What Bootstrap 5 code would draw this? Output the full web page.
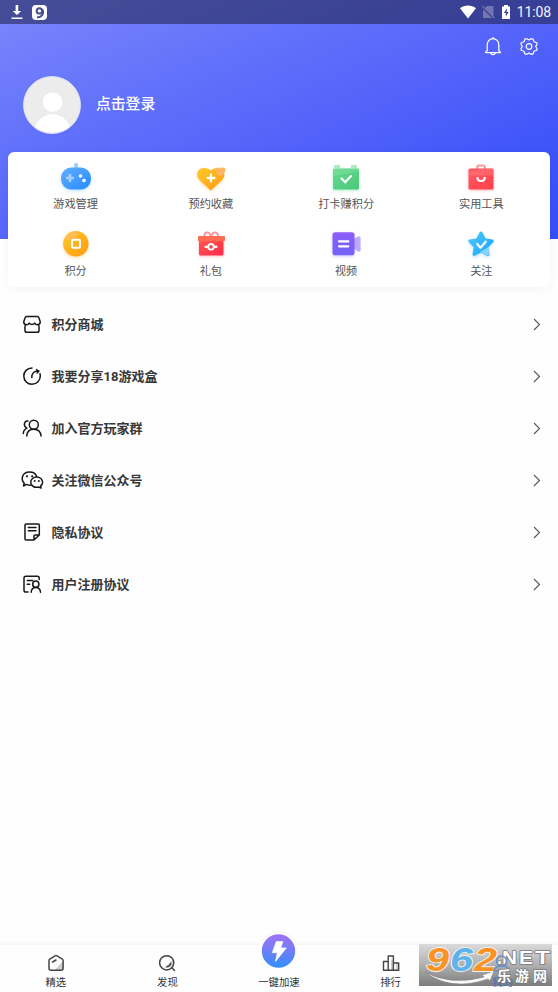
<!DOCTYPE html>
<html lang="zh-CN">
<head>
<meta charset="utf-8">
<meta name="viewport" content="width=device-width, initial-scale=1">
<title>我的</title>
<link href="https://cdn.jsdelivr.net/npm/bootstrap@5.3.0/dist/css/bootstrap.min.css" rel="stylesheet">
<style>
body{font-family:Roboto,"Noto Sans CJK SC",sans-serif;height:992px;overflow:hidden;background:#fefefe;color:#333}
svg{display:block;overflow:visible;flex-shrink:0}
.hero{height:239px;background:linear-gradient(to bottom right,#7b87fd 0%,#6574fa 28%,#5363fa 55%,#3d53f9 82%,#344ef8 100%)}
.status{height:24px;background:rgba(30,32,72,.56);padding:0 7px 0 10px}
.gap-status{margin-left:6px}
.clock{font-size:14px;line-height:24px;font-weight:400;letter-spacing:-.1px;color:#f5f5ff;margin-left:6px}
.tools{height:45px;padding-right:20px;gap:18px}
.who{height:70px;padding:1px 0 0 23px;gap:15px}
.login{font-size:14.8px;font-weight:500}
.panel{height:135px;margin:-87px 8px 0;border-radius:6px;box-shadow:0 2px 10px rgba(0,0,0,.045);position:relative}
.panel .row{margin-right:1px}
.cell{height:67px;padding-top:7px}
.cell span{font-size:11.2px;line-height:16px;color:#555;margin-top:2px}
.cell svg{width:36px;height:36px}
.entries{margin-top:11px}
.entry{height:52px;padding:0 17px 0 20px;gap:7.5px;font-size:13px;font-weight:700;color:#383838}
.entry span{padding-top:2px}
.ink{fill:none;stroke:#171717;stroke-width:1.5;stroke-linecap:round;stroke-linejoin:round}
.tabs{height:47px;padding-bottom:1px;box-shadow:0 -1px 3px rgba(0,0,0,.06);background:#fefefe}
.tab{font-size:10.4px;line-height:16px;width:20%;color:#333}
.tab svg{margin-bottom:3px}
.mark-box{left:419px;top:944px}
</style>
<script src="https://cdn.jsdelivr.net/npm/bootstrap@5.3.0/dist/js/bootstrap.bundle.min.js"></script>
</head>
<body class="d-flex flex-column position-relative">
<header class="hero flex-shrink-0 text-white">
  <div class="status d-flex align-items-center">
    <svg width="14" height="16" viewBox="0 0 14 16"><path d="M5.6 1h2.6v6h3L7 11 2.7 7h2.9zM1.5 13.5h11V15h-11z" fill="#fff"/></svg>
    <svg class="ms-2" width="15" height="15" viewBox="0 0 15 15"><rect width="15" height="15" rx="4" fill="#fff"/><circle cx="7.4" cy="5.9" r="2.7" fill="none" stroke="#484c90" stroke-width="2"/><path d="M10.6 4.5C12.4 9 9.5 12.2 5 12.5" fill="none" stroke="#484c90" stroke-width="1.9"/></svg>
    <svg class="ms-auto" width="16" height="14" viewBox="0 0 16 14"><path d="M0 3.2C4.5-.4 11.5-.4 16 3.2L8 13.4z" fill="#fff"/></svg>
    <svg class="gap-status" width="13" height="14" viewBox="0 0 13 14"><path d="M5 1h6.5v12H1V5z" fill="#7277b2"/><path d="M0 1.5l12 12" stroke="#414595" stroke-width="2.4"/><path d="M.5 1l12 12" stroke="#8b8fc3"/></svg>
    <svg class="gap-status" width="10" height="14" viewBox="0 0 10 14"><path d="M3 0h4v1.5h2V14H1V1.5h2z" fill="#fff"/><path d="M6 3.2L2.8 8h2v3.5L7.7 7h-2z" fill="#414595"/></svg>
    <span class="clock">11:08</span>
  </div>
  <div class="tools d-flex justify-content-end align-items-center">
    <svg width="18" height="20" viewBox="0 0 18 20" fill="none" stroke="#fff" stroke-width="1.25" stroke-linejoin="round"><path d="M9 .1v1.5M3.2 13.5V7.8a5.8 6.2 0 0 1 11.6 0v5.7l1.7 2h-15zM6.7 15.7c.2 2.5 4.4 2.5 4.6 0"/></svg>
    <svg width="18" height="18" viewBox="0 0 18 18" fill="none" stroke="#fff" stroke-width="1.2" stroke-linejoin="round"><path d="M5.1.8h2L9 2 10.900.8h2L14 3.800l2.800 1L17 6.500 15.600 8.500 17 10.500l-.2 1.700-2.800 1-1.100 3h-2L9 15l-1.900 1.200h-2L4 13.200l-2.800-1L1 10.500l1.400-2L1 6.500l.2-1.700 2.800-1z"/><circle cx="9" cy="8.500" r="2.800"/></svg>
  </div>
  <div class="who d-flex align-items-center">
    <svg width="58" height="58" viewBox="0 0 58 58"><defs><clipPath id="face"><circle cx="29" cy="29" r="28"/></clipPath></defs><circle cx="29" cy="29" r="28.6" fill="#ececec"/><circle cx="29.5" cy="26" r="9.8" fill="#fff"/><ellipse cx="29.5" cy="56" rx="18" ry="17.8" fill="#fff" clip-path="url(#face)"/><circle cx="29" cy="29" r="28.4" fill="none" stroke="#dedffa"/></svg>
    <span class="login">点击登录</span>
  </div>
</header>

<section class="panel bg-white flex-shrink-0">
  <div class="row g-0">
    <div class="col-3 cell d-flex flex-column align-items-center">
      <svg viewBox="0 0 36 36"><defs><linearGradient id="blue" x2="1" y2="1"><stop stop-color="#64adff"/><stop offset="1" stop-color="#258cff"/></linearGradient><filter id="glow" x="-30%" y="-30%" width="160%" height="170%"><feDropShadow dx="0" dy="1.3" stdDeviation="1.6" flood-color="#60b5ff" flood-opacity=".45"/></filter></defs><rect x="16.4" y="4" width="3.4" height="7" rx="1.2" fill="#9bcaff"/><rect x="3" y="8.500" width="30" height="22" rx="10.5" fill="url(#blue)" filter="url(#glow)"/><path d="M12 15v8M8 19h8" stroke="#a4d0ff" stroke-width="2.7"/><circle cx="22.5" cy="17" r="1.8" fill="#fff"/><circle cx="26" cy="21.5" r="1.8" fill="#fff"/></svg>
      <span>游戏管理</span>
    </div>
    <div class="col-3 cell d-flex flex-column align-items-center">
      <svg viewBox="0 0 36 36"><defs><linearGradient id="gold" x2="1" y2="1"><stop stop-color="#ffca28"/><stop offset="1" stop-color="#ff9812"/></linearGradient><filter id="glowGold" x="-30%" y="-30%" width="160%" height="170%"><feDropShadow dx="0" dy="1.3" stdDeviation="1.4" flood-color="#ffa726" flood-opacity=".4"/></filter></defs><path d="M16.7 30.6L6.500 21C0 14 8 4.500 17.800 11.500 27.500 4.500 35.500 14 29 21L19 30.600Q17.800 31.700 16.700 30.600z" fill="url(#gold)" filter="url(#glowGold)"/><path d="M27.300 17.500c-8-5.500-4-10.700.4-8.500 5.500-2 7.400 4-.4 8.500z" fill="#ffb765"/><path d="M18 15.500v7M14.500 19h7" stroke="#fff" stroke-width="2.300" stroke-linecap="round"/></svg>
      <span>预约收藏</span>
    </div>
    <div class="col-3 cell d-flex flex-column align-items-center">
      <svg viewBox="0 0 36 36"><defs><linearGradient id="green" x2="1" y2="1"><stop stop-color="#68db90"/><stop offset="1" stop-color="#48c779"/></linearGradient><filter id="glowGreen" x="-30%" y="-30%" width="160%" height="170%"><feDropShadow dx="0" dy="1" stdDeviation="1.4" flood-color="#50cf82" flood-opacity=".45"/></filter></defs><path d="M6 6h6v3H6zM23 6h6v3h-6z" fill="#b0e9c4"/><rect x="5" y="9.500" width="26" height="21" rx="1.500" fill="url(#green)" filter="url(#glowGreen)"/><path d="M5 9.500h26v3L5 17z" fill="#89e2a4" opacity=".35"/><path d="M13.500 19.500l3.700 3.700L23 17" fill="none" stroke="#fff" stroke-width="2.200" stroke-linecap="round"/></svg>
      <span>打卡赚积分</span>
    </div>
    <div class="col-3 cell d-flex flex-column align-items-center">
      <svg viewBox="0 0 36 36"><defs><linearGradient id="red" x2="1" y2="1"><stop stop-color="#ff5965"/><stop offset="1" stop-color="#ff4148"/></linearGradient><filter id="glowRed" x="-30%" y="-30%" width="160%" height="170%"><feDropShadow dx="0" dy="1" stdDeviation="1.4" flood-color="#ff5965" flood-opacity=".4"/></filter></defs><rect x="14.3" y="6.600" width="7.600" height="6" rx="1.500" fill="none" stroke="#f49ba1" stroke-width="2"/><rect x="5.500" y="9.500" width="25" height="21" rx="1.500" fill="url(#red)" filter="url(#glowRed)"/><path d="M5.500 13.500l16-4h9v7h-25z" fill="#ff817f" opacity=".45"/><path d="M14.500 18v.7c0 4.400 7.200 4.400 7.200 0V18" fill="none" stroke="#fff" stroke-width="2.100"/></svg>
      <span>实用工具</span>
    </div>
    <div class="col-3 cell d-flex flex-column align-items-center">
      <svg viewBox="0 0 36 36"><circle cx="17.800" cy="17.700" r="12.700" fill="url(#gold)" filter="url(#glowGold)"/><path d="M6 14Q10 4 20 5.400C22 9 14 15 6 14z" fill="#ffbe62" opacity=".7"/><rect x="14" y="13.700" width="8" height="8" rx="1.300" fill="none" stroke="#fff" stroke-width="2"/></svg>
      <span>积分</span>
    </div>
    <div class="col-3 cell d-flex flex-column align-items-center">
      <svg viewBox="0 0 36 36"><defs><linearGradient id="gift" x2="1" y2="1"><stop stop-color="#ff5a51"/><stop offset="1" stop-color="#ff2949"/></linearGradient></defs><path d="M11.500 11c-1-7 6-5 6 0M18.500 11c0-5 7-7 6.500 0" fill="none" stroke="#f79a9f" stroke-width="2"/><rect x="6" y="12" width="24.500" height="17.500" rx="1.500" fill="url(#gift)" filter="url(#glowRed)"/><rect x="5" y="10" width="27" height="5.300" rx="1" fill="#ff6c51"/><path d="M12.500 20.800H15m6 0h2.500" stroke="#fff" stroke-width="2.200" stroke-linecap="round"/><circle cx="18" cy="20.800" r="2.800" fill="none" stroke="#fff" stroke-width="1.900"/></svg>
      <span>礼包</span>
    </div>
    <div class="col-3 cell d-flex flex-column align-items-center">
      <svg viewBox="0 0 36 36"><defs><linearGradient id="purple" y2="1" x2="0"><stop stop-color="#8c5cf8"/><stop offset="1" stop-color="#7164f9"/></linearGradient><filter id="glowPurple" x="-30%" y="-30%" width="160%" height="170%"><feDropShadow dx="0" dy="1.2" stdDeviation="1.4" flood-color="#9976ff" flood-opacity=".4"/></filter></defs><path d="M25 13.800l4.800-3.300q2.800-.8 2.800 1.500v12q0 2.300-2.800 1.500L25 22z" fill="#bdabff"/><rect x="4.500" y="6.200" width="22" height="23" rx="2.800" fill="url(#purple)" filter="url(#glowPurple)"/><path d="M11 15.400h9.300M11 20.300h9.300" stroke="#fff" stroke-width="2.200" stroke-linecap="round"/></svg>
      <span>视频</span>
    </div>
    <div class="col-3 cell d-flex flex-column align-items-center">
      <svg viewBox="0 0 36 36"><defs><linearGradient id="sky" x2="1" y2="1"><stop stop-color="#4bc8ff"/><stop offset="1" stop-color="#1ba5f8"/></linearGradient></defs><path d="M18 7l3.500 6.800 7.700 1.200-5.500 5.700 1.300 7.700-7-3.500-7 3.500 1.300-7.700L6.800 15l7.700-1.200z" fill="url(#sky)" stroke="url(#sky)" stroke-width="3" stroke-linejoin="round" filter="url(#glow)"/><path d="M16.500 26.200L25.500 21l1.400 8q-1.300 1-8.900-2.600z" fill="#85d4ff"/><path d="M14.200 18l3.300 3.700 5.200-6" fill="none" stroke="#fff" stroke-width="2.200" stroke-linecap="round" stroke-linejoin="round"/></svg>
      <span>关注</span>
    </div>
  </div>
</section>

<main class="entries flex-grow-1">
  <div class="entry d-flex align-items-center">
    <svg class="ink" width="24" height="24" viewBox="0 0 24 24"><path d="M6.500 4.500h11q1 0 1.300 1l1.300 3.700c.9 3.800-3.800 4.600-5.400 1.900-1.400 1.800-4 1.800-5.400 0C7.700 13.800 3 13 3.900 9.200l1.300-3.700q.3-1 1.300-1zM5 13.700v4.700q0 1.800 1.800 1.800h10.400q1.800 0 1.800-1.800v-4.700"/></svg>
    <span class="flex-grow-1">积分商城</span>
    <svg width="8" height="13" viewBox="0 0 8 13"><path d="M1 1l5.500 5.500L1 12" fill="none" stroke="#555" stroke-width="1.100"/></svg>
  </div>
  <div class="entry d-flex align-items-center">
    <svg class="ink" width="24" height="24" viewBox="0 0 24 24"><path d="M12 3.900c-5 .1-8.200 3.800-8.200 8.200 0 4.800 3.700 8.200 8.200 8.200 4.900 0 8.300-3.800 8.300-8.300 0-.8-.1-1.500-.3-2.200M11.800 13.500c-.2-4.200 2.500-6.500 6-6.500"/><path d="M16 4.500L20 7l-3.200 3.300z" fill="#171717" stroke="none"/></svg>
    <span class="flex-grow-1">我要分享18游戏盒</span>
    <svg width="8" height="13" viewBox="0 0 8 13"><path d="M1 1l5.500 5.500L1 12" fill="none" stroke="#555" stroke-width="1.100"/></svg>
  </div>
  <div class="entry d-flex align-items-center">
    <svg class="ink" width="24" height="24" viewBox="0 0 24 24"><circle cx="13.800" cy="8.800" r="4.500"/><path d="M6.800 20c.2-4.300 3-6.700 7-6.700s6.800 2.400 7.300 6.700M8 5C5.300 4.700 4.300 6.500 4.400 8.500c.1 1.800 1 3 2.600 3.600-2.300.9-3.500 2.400-3.700 5.400"/></svg>
    <span class="flex-grow-1">加入官方玩家群</span>
    <svg width="8" height="13" viewBox="0 0 8 13"><path d="M1 1l5.500 5.500L1 12" fill="none" stroke="#555" stroke-width="1.100"/></svg>
  </div>
  <div class="entry d-flex align-items-center">
    <svg class="ink" width="24" height="24" viewBox="0 0 24 24"><path d="M11 17c-1.800.3-3.500 0-4.700-.6L3.500 18l.7-3C.5 11.500 2 4 9.500 4c4 0 6.500 2 7.300 4.800M20.700 17.800l.4 2.300-2.400-1.100c-3.800 1.200-8-1-8-4.700 0-3.100 2.800-5.300 6-5.300s5.900 2.200 5.900 5.200c0 1.400-.7 2.700-1.900 3.600z"/><g fill="#171717" stroke="none"><circle cx="7" cy="8.300" r="1.100"/><circle cx="12.200" cy="8.300" r="1.100"/><circle cx="14.700" cy="13" r="1"/><circle cx="18.800" cy="13" r="1"/></g></svg>
    <span class="flex-grow-1">关注微信公众号</span>
    <svg width="8" height="13" viewBox="0 0 8 13"><path d="M1 1l5.500 5.500L1 12" fill="none" stroke="#555" stroke-width="1.100"/></svg>
  </div>
  <div class="entry d-flex align-items-center">
    <svg class="ink" width="24" height="24" viewBox="0 0 24 24"><path d="M14 20H6q-1 0-1-1V5q0-1 1-1h12.300q1 0 1 1v10zM8.300 7.500H16M8.300 10.700H16M14 20v-4q0-1 1-1h4.300"/></svg>
    <span class="flex-grow-1">隐私协议</span>
    <svg width="8" height="13" viewBox="0 0 8 13"><path d="M1 1l5.500 5.500L1 12" fill="none" stroke="#555" stroke-width="1.100"/></svg>
  </div>
  <div class="entry d-flex align-items-center">
    <svg class="ink" width="24" height="24" viewBox="0 0 24 24"><path d="M8 20H5.800Q4 20 4 18.200V6q0-1.800 1.800-1.800h11.600q1.800 0 1.800 1.800v1.500M7.200 8.500h5.500M7.200 12.300h2.500"/><circle cx="15.800" cy="12.200" r="3.100"/><path d="M11.200 20.200c.2-3.200 2-4.800 4.600-4.800s4.500 1.600 4.700 4.800"/></svg>
    <span class="flex-grow-1">用户注册协议</span>
    <svg width="8" height="13" viewBox="0 0 8 13"><path d="M1 1l5.500 5.500L1 12" fill="none" stroke="#555" stroke-width="1.100"/></svg>
  </div>
</main>

<nav class="tabs d-flex align-items-end flex-shrink-0">
  <div class="tab d-flex flex-column align-items-center"><svg width="18" height="18" viewBox="0 0 18 18"><path d="M8 16L16 7v8l-2 2z" fill="#ccc"/><path d="M8 1.800q1-.5 2 0l5.300 3.300q.8.500.8 1.500v7.600q0 2-2 2H4q-2 0-2-2V6.600q0-1 .8-1.500zM5.500 8L9 6" fill="none" stroke="#444" stroke-width="1.500" stroke-linecap="round"/></svg><span>精选</span></div>
  <div class="tab d-flex flex-column align-items-center"><svg width="18" height="18" viewBox="0 0 18 18"><path d="M6 14L15 6q1 8-9 8" fill="#ccc"/><circle cx="8.700" cy="8.800" r="7.100" fill="none" stroke="#444" stroke-width="1.500"/><path d="M9 12.800q3-.5 3.700-3.500M13.800 13.800l2.700 2.700" fill="none" stroke="#444" stroke-width="1.500" stroke-linecap="round"/></svg><span>发现</span></div>
  <div class="tab d-flex flex-column align-items-center"><svg class="mb-1" width="40" height="40" viewBox="0 0 40 40"><defs><linearGradient id="bolt" x2="0" y2="1"><stop stop-color="#a073f5"/><stop offset=".5" stop-color="#6f7df7"/><stop offset="1" stop-color="#318ffa"/></linearGradient></defs><circle cx="19.500" cy="20" r="19.500" fill="#fff"/><path d="M3 10a19.500 19.500 0 0 1 33 0" fill="none" stroke="#f2f2f2"/><circle cx="19.500" cy="20" r="16.700" fill="url(#bolt)"/><path d="M17.300 10.500h6.500l-2 6.500h5.500L16.500 30.500l1.800-8.800h-5z" fill="#fff" stroke="#fff" stroke-width=".7" stroke-linejoin="round"/></svg><span>一键加速</span></div>
  <div class="tab d-flex flex-column align-items-center"><svg width="18" height="18" viewBox="0 0 18 18"><path d="M9 5l3 2v10H9zM14 9h3v7h-3z" fill="#ccc"/><path d="M1.500 7.500h4.700v8.800H1.500zM6.200 2h5.200v14.300H6.200zM11.400 9h5.300v7.300h-5.300z" fill="none" stroke="#444" stroke-width="1.400" stroke-linejoin="round"/></svg><span>排行</span></div>
  <div class="tab"></div>
</nav>

<svg class="mark-box position-absolute" width="133" height="42" viewBox="0 0 133 42">
  <defs><linearGradient id="steel" x2="0" y2="1"><stop stop-color="#dadada"/><stop offset=".5" stop-color="#b0b0b0"/><stop offset="1" stop-color="#7c7c7c"/></linearGradient></defs>
  <rect width="133" height="42" fill="url(#steel)"/>
  <path d="M6 28Q31 42 65 33L63 31 75 27 71 37 69 35Q32 48 6 28z" fill="#f7f7f7" stroke="#808080" stroke-width=".6"/>
  <g font-family="Liberation Sans" font-weight="700" stroke-linejoin="round" paint-order="stroke">
    <g font-size="34" font-style="italic" stroke="#f4f4f4" stroke-width="1.800"><text x="7" y="27" textLength="23" lengthAdjust="spacingAndGlyphs" fill="#fb9224">9</text><text x="31" y="27" textLength="23" lengthAdjust="spacingAndGlyphs" fill="#5db3ea">6</text><text x="55" y="27" textLength="23" lengthAdjust="spacingAndGlyphs" fill="#fb9224">2</text></g>
    <text x="78" y="20" font-size="18.500" textLength="5" lengthAdjust="spacingAndGlyphs" fill="#fff" stroke="#777" stroke-width="1.500">.</text>
    <g font-size="18.500" fill="#fff" stroke="#777" stroke-width="1.500"><text x="83" y="20" textLength="15" lengthAdjust="spacingAndGlyphs">N</text><text x="100" y="20" textLength="14" lengthAdjust="spacingAndGlyphs">E</text><text x="116" y="20" textLength="15" lengthAdjust="spacingAndGlyphs">T</text></g>
  </g>
  <g fill="none" stroke="#648fc7" stroke-width="1.500"><circle cx="82.500" cy="17" r="5"/><path d="M75 27q0-5 7.500-5t7.500 5z"/></g>
  <text x="73" y="42" font-family="Noto Sans CJK SC" font-size="10.400" fill="#4777bd">我的</text>
  <g font-family="Noto Sans CJK SC" font-size="14" font-weight="700" fill="#fff" stroke="#777" stroke-width="1.300" paint-order="stroke"><text x="78" y="37">乐</text><text x="96" y="37">游</text><text x="114" y="37">网</text></g>
</svg>
</body>
</html>
